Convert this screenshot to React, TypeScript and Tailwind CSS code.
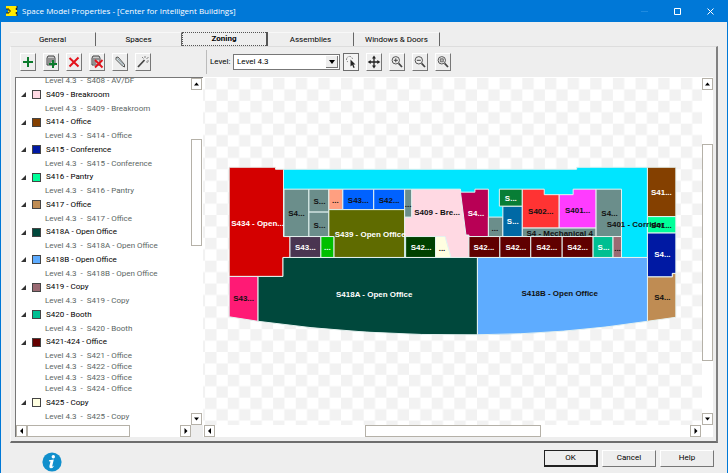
import { useState } from "react";
import type { ReactNode } from "react";

type Zone = {
  name: string;
  color: string;
  spaces: string[];
};

const zones: Zone[] = [
  { name: "S409 - Breakroom", color: "#ffd9e3", spaces: ["S409 - Breakroom"] },
  { name: "S414 - Office", color: "#844000", spaces: ["S414 - Office"] },
  { name: "S415 - Conference", color: "#0019a3", spaces: ["S415 - Conference"] },
  { name: "S416 - Pantry", color: "#00ff99", spaces: ["S416 - Pantry"] },
  { name: "S417 - Office", color: "#bf8c53", spaces: ["S417 - Office"] },
  { name: "S418A - Open Office", color: "#00483c", spaces: ["S418A - Open Office"] },
  { name: "S418B - Open Office", color: "#5eacff", spaces: ["S418B - Open Office"] },
  { name: "S419 - Copy", color: "#9a6a73", spaces: ["S419 - Copy"] },
  { name: "S420 - Booth", color: "#00bf92", spaces: ["S420 - Booth"] },
  {
    name: "S421-424 - Office",
    color: "#640000",
    spaces: ["S421 - Office", "S422 - Office", "S423 - Office", "S424 - Office"],
  },
  { name: "S425 - Copy", color: "#ffffe1", spaces: ["S425 - Copy"] },
];

type Room = {
  d: string;
  fill: string;
};

// Drawing units are one per pixel, the view box starts at 203,78
const rooms: Room[] = [
  { d: "M283 169.5H577V167.5H648V258H283Z", fill: "#00e5ff" },
  { d: "M228.5 167.5H275V169.5H283V237H289.5V258H282.5V277H228.5Z", fill: "#d40000" },
  { d: "M283.5 189.5H308.5V237H283.5Z", fill: "#6b8e8b" },
  { d: "M308.5 189.5H328.5V212.5H308.5Z", fill: "#6b8e8b" },
  { d: "M308.5 212.5H328.5V237H308.5Z", fill: "#6b8e8b" },
  { d: "M328.5 189.5H342.5V210H328.5Z", fill: "#ff9f80" },
  { d: "M342.5 189.5H373.5V210H342.5Z", fill: "#0062ff" },
  { d: "M373.5 189.5H404.5V210H373.5Z", fill: "#0062ff" },
  { d: "M328.5 210H404.5V258H333.5V237H328.5Z", fill: "#5f6b00" },
  { d: "M404.5 217.5H411.5V189.5H460.5L466 235.5H469V258H451L445 237H404.5Z", fill: "#ffd9e3" },
  { d: "M404.5 189.5H411.5V217.5H404.5Z", fill: "#6b8e8b" },
  { d: "M289.5 237H320.5V258H289.5Z", fill: "#4a3551" },
  { d: "M320.5 237H333.5V258H320.5Z", fill: "#00bf00" },
  { d: "M405.5 237H435.5V258H405.5Z", fill: "#004000" },
  { d: "M435.5 237H445L451 258H435.5Z", fill: "#ffffe1" },
  { d: "M460.5 192.5H475V189.5H488.5V237H469V235.5H466Z", fill: "#b80055" },
  { d: "M488.5 217.5H503V237H488.5Z", fill: "#6b8e8b" },
  { d: "M503 206.5H522.5V237H503Z", fill: "#0069a5" },
  { d: "M499.5 189.5H522.5V206.5H499.5Z", fill: "#087e36" },
  { d: "M522.5 189.5H544.5V195H559.5V228.5H522.5Z", fill: "#ff3333" },
  { d: "M559.5 195H573.5V189.5H596.5V228.5H559.5Z", fill: "#ff3cff" },
  { d: "M522.5 228.5H596.5V237H522.5Z", fill: "#6b8e8b" },
  { d: "M596.5 189.5H622V237H596.5Z", fill: "#6b8e8b" },
  { d: "M469 237H500V258H469Z", fill: "#600000" },
  { d: "M500 237H531V258H500Z", fill: "#600000" },
  { d: "M531 237H562.5V258H531Z", fill: "#600000" },
  { d: "M562.5 237H593.5V258H562.5Z", fill: "#600000" },
  { d: "M593.5 237H613.5V258H593.5Z", fill: "#00bf92" },
  { d: "M613.5 237H622V258H613.5Z", fill: "#9a6a73" },
  { d: "M648 167.5H676.5V217H648Z", fill: "#844000" },
  { d: "M648 217H676.5V233.5H648Z", fill: "#00ff99" },
  { d: "M648 233.5H676.5V274H673V277.5H648Z", fill: "#0019a3" },
  { d: "M648 277.5H673V274H676.5V318L648 322Z", fill: "#bf8c53" },
  { d: "M228.5 277H257.5V322L228.5 317.5Z", fill: "#ff1a75" },
  { d: "M282.5 258H477.5V335.5Q365 337 257.5 322V277H282.5Z", fill: "#00483c" },
  { d: "M477.5 258H648V322Q565 335 477.5 335.5Z", fill: "#5eacff" },
];

type Label = {
  x: number;
  y: number;
  text: string;
  light?: boolean;
};

const labels: Label[] = [
  { x: 257, y: 226, text: "S434 - Open...", light: true },
  { x: 296, y: 216, text: "S4..." },
  { x: 319, y: 204, text: "S..." },
  { x: 319, y: 228, text: "S..." },
  { x: 335, y: 203, text: "..." },
  { x: 358, y: 203, text: "S43..." },
  { x: 389, y: 203, text: "S42..." },
  { x: 408, y: 207, text: "..." },
  { x: 370, y: 237, text: "S439 - Open Office", light: true },
  { x: 437, y: 215, text: "S409 - Bre..." },
  { x: 476, y: 216, text: "S4...", light: true },
  { x: 495, y: 231, text: "..." },
  { x: 511, y: 201, text: "S...", light: true },
  { x: 513, y: 224, text: "S...", light: true },
  { x: 541, y: 214, text: "S402..." },
  { x: 578, y: 213, text: "S401..." },
  { x: 560, y: 236, text: "S4 - Mechanical 4" },
  { x: 610, y: 216, text: "S4..." },
  { x: 305, y: 251, text: "S43...", light: true },
  { x: 327, y: 251, text: "...", light: true },
  { x: 421, y: 250, text: "S42...", light: true },
  { x: 442, y: 252, text: "..." },
  { x: 484, y: 251, text: "S42...", light: true },
  { x: 516, y: 251, text: "S42...", light: true },
  { x: 547, y: 251, text: "S42...", light: true },
  { x: 578, y: 251, text: "S42...", light: true },
  { x: 604, y: 251, text: "S...", light: true },
  { x: 618, y: 252, text: "..." },
  { x: 662, y: 195, text: "S41...", light: true },
  { x: 662, y: 228, text: "S41..." },
  { x: 636, y: 227, text: "S401 - Corridor" },
  { x: 663, y: 258, text: "S4...", light: true },
  { x: 663, y: 301, text: "S4..." },
  { x: 243, y: 302, text: "S43..." },
  { x: 374, y: 298, text: "S418A - Open Office", light: true },
  { x: 560, y: 297, text: "S418B - Open Office" },
];

const tabs = ["General", "Spaces", "Zoning", "Assemblies", "Windows & Doors"];

function ToolButton({
  label,
  pressed,
  children,
}: {
  label: string;
  pressed?: boolean;
  children: ReactNode;
}) {
  return (
    <button
      type="button"
      aria-label={label}
      aria-pressed={pressed}
      className={
        pressed
          ? "flex h-[18px] w-4 items-center justify-center border border-[#6d6d6d] bg-[#f4f4f4]"
          : "flex h-[18px] w-4 items-center justify-center border border-t-white border-r-[#777] border-b-[#777] border-l-white bg-[#eee]"
      }
    >
      <svg viewBox="0 0 14 16" className="h-4 w-[14px] shrink-0" fill="none">
        {children}
      </svg>
    </button>
  );
}

function ScrollArrow({ direction }: { direction: "up" | "down" | "left" | "right" }) {
  const paths = {
    up: "M2 6.5H7L4.5 3.5Z",
    down: "M2 3.5H7L4.5 6.5Z",
    left: "M6 2V8L3 5Z",
    right: "M3.5 2V8L6.5 5Z",
  };
  return (
    <button
      type="button"
      aria-label={`Scroll ${direction}`}
      className="flex h-3 w-[11px] shrink-0 items-center justify-center border border-[#b5b1a8] bg-white"
    >
      <svg viewBox="0 0 9 10" className="h-[10px] w-[9px] shrink-0">
        <path d={paths[direction]} fill="#000" />
      </svg>
    </button>
  );
}

function Magnifier({ children }: { children?: ReactNode }) {
  return (
    <>
      <circle cx="5.8" cy="6.3" r="3.7" stroke="#555" strokeWidth="1" />
      <path d="M8.6 9.3L12 13" stroke="#444" strokeWidth="1.7" />
      {children}
    </>
  );
}

function ZoneTree() {
  return (
    <ul className="-mt-[3px] flex flex-1 flex-col justify-between pb-[3px] pl-[29px]">
      <li className="h-[11px] leading-[11px] whitespace-pre text-[#5b6664]">
        Level 4.3  -  S408 - AV/DF
      </li>
      {zones.map((zone) => (
        <li key={zone.name}>
          <div className="-ml-6 flex h-4 items-center">
            <svg viewBox="0 0 5 5" className="mr-[6px] size-[5px]">
              <path d="M5 0V5H0Z" fill="#333" />
            </svg>
            <span
              className="mr-[5px] size-[9px] border border-[#444]"
              style={{ backgroundColor: zone.color }}
            />
            <span className="text-black">{zone.name}</span>
          </div>
          <ul>
            {zone.spaces.map((space) => (
              <li key={space} className="h-[11px] leading-[11px] whitespace-pre text-[#5b6664]">
                Level 4.3  -  {space}
              </li>
            ))}
          </ul>
        </li>
      ))}
    </ul>
  );
}

function FloorPlan() {
  return (
    <svg viewBox="203 78 499 348" className="absolute inset-0 size-full overflow-visible">
      <defs>
        <pattern id="checker" x="204.4" y="78" width="22.72" height="22.9" patternUnits="userSpaceOnUse">
          <rect width="22.72" height="22.9" fill="#fff" />
          <rect width="11.36" height="11.45" fill="#f2f2f2" />
          <rect x="11.36" y="11.45" width="11.36" height="11.45" fill="#f2f2f2" />
        </pattern>
      </defs>
      <rect x="-1000" y="-1000" width="3000" height="3000" fill="url(#checker)" />
      {rooms.map((room) => (
        <path key={room.d} d={room.d} fill={room.fill} stroke="#e6f2f0" strokeWidth="1" />
      ))}
      <g
        fontFamily="'Liberation Sans', Arial, sans-serif"
        fontSize="8"
        fontWeight="bold"
        textAnchor="middle"
      >
        {labels.map((label) => (
          <text
            key={`${label.x}-${label.y}`}
            x={label.x}
            y={label.y}
            fill={label.light ? "#fff" : "#111"}
          >
            {label.text}
          </text>
        ))}
      </g>
    </svg>
  );
}

export default function App() {
  const [activeTab, setActiveTab] = useState("Zoning");
  const [level, setLevel] = useState("Level 4.3");

  return (
    <div className="flex min-h-screen flex-col border-r border-l border-[#0078d7] bg-[#eee] font-[Roboto,'Liberation_Sans',sans-serif] text-[8px] text-black">
      <header className="-mx-px flex h-[22px] items-center bg-[#0078d7] pr-[13px] pl-[6px] text-white">
        <svg viewBox="0 0 12 12" className="mr-1 size-3">
          <path d="M0 1H11V11H0V8H2V4H0Z" fill="#ffea00" />
          <path d="M0 4H3V6H5M0 8H3V7M11 1V3M11 9V11" stroke="#222" strokeWidth="1" fill="none" />
          <path d="M10.5 3V5M10.5 7V9" stroke="#222" strokeWidth="1.5" />
        </svg>
        <h1 className="font-['Open_Sans',sans-serif]">
          Space Model Properties - [Center for Intelligent Buildings]
        </h1>
        <div className="ml-auto flex items-center gap-6">
          <button type="button" aria-label="Minimize" className="flex">
            <svg viewBox="0 0 9 9" className="size-[9px]">
              <path d="M1 4.5H8" stroke="#1f8be0" />
            </svg>
          </button>
          <button type="button" aria-label="Maximize" className="flex">
            <svg viewBox="0 0 9 9" className="size-[9px]">
              <path d="M1.5 1.5H7.5V7.5H1.5Z" stroke="#fff" fill="none" />
            </svg>
          </button>
          <button type="button" aria-label="Close" className="flex">
            <svg viewBox="0 0 9 9" className="size-[9px]">
              <path d="M1.5 1.5L7.5 7.5M7.5 1.5L1.5 7.5" stroke="#fff" fill="none" />
            </svg>
          </button>
        </div>
      </header>

      <div role="tablist" className="flex pt-[10px] pl-[9px]">
        {tabs.map((tab) => (
          <button
            key={tab}
            type="button"
            role="tab"
            aria-selected={tab === activeTab}
            onClick={() => setActiveTab(tab)}
            className={
              tab === activeTab
                ? "h-[14px] w-[86px] border-r-2 border-[#555] leading-3 font-bold outline outline-dotted -outline-offset-1 outline-[#555]"
                : "h-[14px] w-[86px] border-t border-r border-t-[#f8f8f8] border-r-[#666] leading-3"
            }
          >
            {tab}
          </button>
        ))}
      </div>

      <main className="mr-[9px] ml-[9px] flex flex-1 flex-col border-t border-r-2 border-b-2 border-l border-t-[#ddd] border-r-[#808080] border-b-[#6d6d6d] border-l-[#fafafa]">
        <div className="flex h-[30px] items-center gap-[7px] pl-[9px]">
          <ToolButton label="Add zone">
            <path d="M7 3V13M2 8H12" stroke="#0b7a2c" strokeWidth="2" />
          </ToolButton>
          <ToolButton label="Add zones from spaces">
            <path d="M3 4L4 2H10L11 4V11H3Z" fill="#ccc" stroke="#444" />
            <path d="M4 5H10M4 7H10M4 9H7" stroke="#555" />
            <path d="M9 6V14M5 10H13" stroke="#0b7a2c" strokeWidth="2" />
          </ToolButton>
          <ToolButton label="Delete zone">
            <path d="M2.5 4L11.5 12.5M11.5 3.5L2.5 12.5" stroke="#e3121b" strokeWidth="2" />
          </ToolButton>
          <ToolButton label="Delete all zones">
            <path d="M2 4L3 2H9L10 4V11H2Z" fill="#ccc" stroke="#444" />
            <path d="M3 5H9M3 7H6M3 9H6" stroke="#555" />
            <path d="M5 6L12.5 13.5M12.5 6L5 13.5" stroke="#e3121b" strokeWidth="1.8" />
          </ToolButton>
          <ToolButton label="Edit zone">
            <path d="M3 3.5L5 3L11.5 10.5V13L9.5 12L3 5.5Z" fill="#dce6e4" stroke="#444" strokeWidth="0.9" />
            <path d="M4.5 4.5L10.5 11" stroke="#789" strokeWidth="0.8" />
          </ToolButton>
          <ToolButton label="Zone wizard">
            <path d="M2 13L8.5 6" stroke="#444" strokeWidth="1.7" />
            <path d="M9 2V4M12.5 3L10.5 5M13 7H11M6 3L7.5 4.5M11.5 9L10.5 7.5" stroke="#666" strokeWidth="0.8" />
          </ToolButton>
          <div className="ml-12 h-6 border-l border-[#bbb]" />
          <div className="-ml-1 flex items-center gap-[3px]">
            <label htmlFor="level" className="w-5 whitespace-nowrap">
              Level:
            </label>
            <div className="relative h-4 w-[107px] border border-[#777] bg-white">
              <select
                id="level"
                value={level}
                onChange={(e) => setLevel(e.target.value)}
                className="block h-full w-full appearance-none pl-[3px] leading-[14px] outline-none"
              >
                <option>Level 4.3</option>
              </select>
              <span className="pointer-events-none absolute inset-y-px right-px flex w-3 items-center justify-center border-r border-b border-[#777] bg-[#eee]">
                <svg viewBox="0 0 6 4" className="h-1 w-[6px]">
                  <path d="M0 0H6L3 4Z" fill="#000" />
                </svg>
              </span>
            </div>
          </div>
          <div className="-ml-1 flex gap-[7px]">
            <ToolButton label="Select" pressed>
              <path d="M4 8A3 3 0 1 1 8.5 5" stroke="#777" strokeDasharray="1.5 1" />
              <path d="M6.5 5.5V12.5L8.2 11L9.5 14L10.7 13.4L9.4 10.6H11.5Z" fill="#222" />
            </ToolButton>
            <ToolButton label="Pan">
              <path d="M7 3V13M2 8H12" stroke="#222" strokeWidth="1.3" />
              <path d="M7 1.5L9 4.5H5ZM7 14.5L9 11.5H5ZM0.7 8L3.7 6V10ZM13.3 8L10.3 6V10Z" fill="#222" />
            </ToolButton>
            <ToolButton label="Zoom in">
              <Magnifier>
                <path d="M5.8 4.3V8.3M3.8 6.3H7.8" stroke="#444" />
              </Magnifier>
            </ToolButton>
            <ToolButton label="Zoom out">
              <Magnifier>
                <path d="M3.8 6.3H7.8" stroke="#444" />
              </Magnifier>
            </ToolButton>
            <ToolButton label="Zoom to fit">
              <Magnifier>
                <path d="M4.3 4.8H7.3V7.8H4.3Z" stroke="#555" fill="#bbb" strokeWidth="0.8" />
              </Magnifier>
            </ToolButton>
          </div>
        </div>

        <div className="flex flex-1 pb-1 pl-1">
          <section
            aria-label="Zones"
            className="flex w-[188px] shrink-0 flex-col border-t border-l border-[#777] bg-white"
          >
            <div className="flex flex-1">
              <div className="flex flex-1 flex-col overflow-hidden">
                <ZoneTree />
              </div>
              <div className="flex w-[11px] flex-col">
                <ScrollArrow direction="up" />
                <div className="mt-[49px] h-[107px] border border-[#b5b1a8] bg-white" />
                <div className="mt-auto flex">
                  <ScrollArrow direction="down" />
                </div>
              </div>
              <div className="w-px" />
            </div>
            <div className="flex h-3 items-stretch">
              <ScrollArrow direction="left" />
              <div className="w-[103px] border border-[#b5b1a8] bg-white" />
              <div className="ml-auto flex">
                <ScrollArrow direction="right" />
              </div>
              <div className="w-3 bg-[#eee]" />
            </div>
          </section>

          <section aria-label="Floor plan" className="mr-[3px] flex flex-1 flex-col bg-white">
            <div className="flex flex-1 pt-px">
              <div className="relative flex-1 overflow-hidden">
                <FloorPlan />
              </div>
              <div className="flex w-[11px] flex-col">
                <ScrollArrow direction="up" />
                <div className="mt-[54px] h-[217px] border border-[#b5b1a8] bg-white" />
                <div className="mt-auto flex">
                  <ScrollArrow direction="down" />
                </div>
              </div>
            </div>
            <div className="flex h-3 items-stretch pr-3 pl-px">
              <ScrollArrow direction="left" />
              <div className="flex flex-1 justify-center">
                <div className="w-[176px] border border-[#b5b1a8] bg-white" />
              </div>
              <ScrollArrow direction="right" />
            </div>
          </section>
        </div>
      </main>

      <footer className="flex h-[30px] items-center pr-[13px] pl-[41px]">
        <button type="button" aria-label="Information" className="mt-2">
          <svg viewBox="0 0 20 20" className="size-5">
            <circle cx="10" cy="10" r="9.6" fill="#118fcc" />
            <circle cx="11.3" cy="4.7" r="1.7" fill="#fff" />
            <path d="M7 8.3L11.8 7.6L10.2 14.3Q10.4 14.8 12.3 13.4Q11 16.3 8.6 16.2Q6.9 16 7.4 14L8.5 9.6L6.9 9.3Z" fill="#fff" />
          </svg>
        </button>
        <div className="ml-auto flex gap-1">
          <button type="button" className="h-[17px] w-[54px] border border-[#222] border-r-2 border-b-2 bg-[#eee] leading-3">
            OK
          </button>
          <button
            type="button"
            className="h-[17px] w-[54px] border border-t-white border-r-[#777] border-b-[#777] border-l-white bg-[#eee] leading-3"
          >
            Cancel
          </button>
          <button
            type="button"
            className="h-[17px] w-[54px] border border-t-white border-r-[#777] border-b-[#777] border-l-white bg-[#eee] leading-3"
          >
            Help
          </button>
        </div>
      </footer>
    </div>
  );
}
